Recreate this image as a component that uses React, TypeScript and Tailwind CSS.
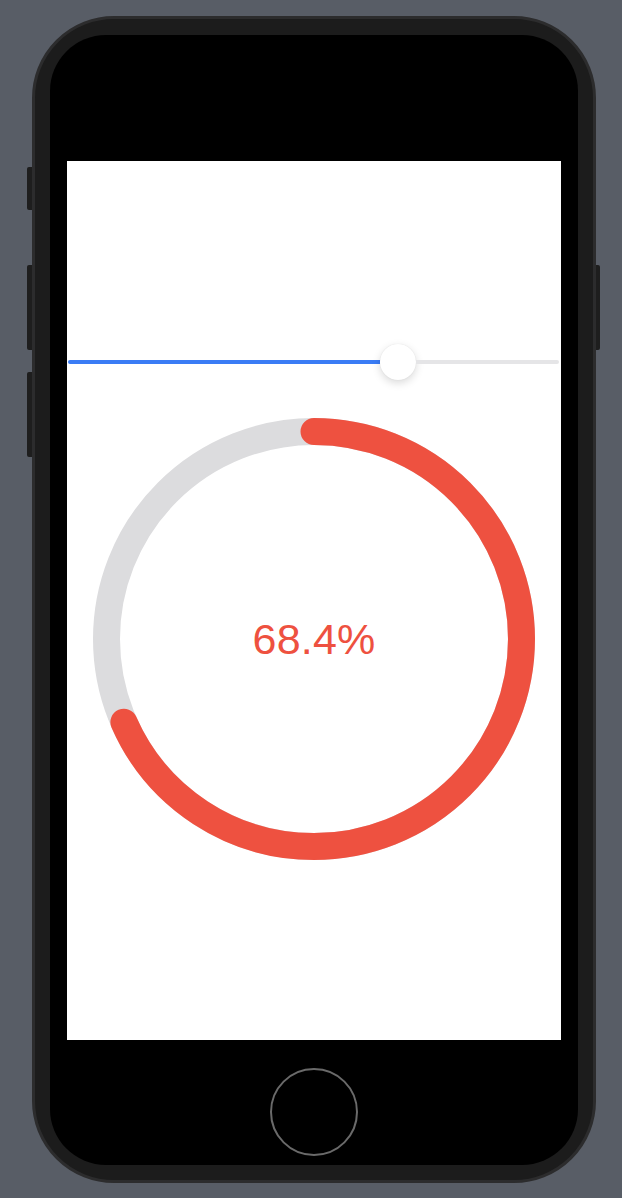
import React from 'react';

const RADIUS = 207.5;
const STROKE = 27;
const CIRC = 2 * Math.PI * RADIUS;

const ProgressRing: React.FC<{ value: number }> = ({ value }) => {
    const size = RADIUS * 2 + STROKE;
    const c = size / 2;
    return (
        <div className="grid place-items-center w-[442px] h-[442px]">
            <svg className="col-start-1 row-start-1" width={size} height={size} viewBox={`0 0 ${size} ${size}`}>
                <circle cx={c} cy={c} r={RADIUS} fill="none" stroke="#dcdcde" strokeWidth={STROKE} />
                <circle
                    cx={c}
                    cy={c}
                    r={RADIUS}
                    fill="none"
                    stroke="#ee5140"
                    strokeWidth={STROKE}
                    strokeLinecap="round"
                    strokeDasharray={`${CIRC * value} ${CIRC}`}
                    transform={`rotate(-90 ${c} ${c})`}
                />
            </svg>
            <span className="col-start-1 row-start-1 text-[43px] leading-none text-[#ee5140] font-['Liberation_Sans',Arial,sans-serif] tracking-[0.2px]">
                {(value * 100).toFixed(1)}%
            </span>
        </div>
    );
};

// blue part, thumb, then the rest of the track
const Slider: React.FC<{ fill: number }> = ({ fill }) => (
    <div className="flex items-center h-[36px] ml-px mr-[2px]">
        <div className="h-[4px] rounded-l-full bg-[#3a7cf5]" style={{ width: fill - 18 }} />
        <div className="w-[36px] h-[36px] shrink-0 rounded-full bg-white shadow-[0_3px_8px_rgba(0,0,0,0.15),0_0_1px_rgba(0,0,0,0.12)]" />
        <div className="flex-1 h-[4px] rounded-r-full bg-[#e5e5e7]" />
    </div>
);

const App: React.FC = () => {
    return (
        <div className="w-[622px] h-[1198px] bg-[#585d66] pt-[16px] pl-[32px] overflow-hidden">
            {/* Phone body */}
            <div className="relative w-[564px] h-[1167px] rounded-[82px] bg-[#1c1c1c] border-[3px] border-[#2c2c2d] pt-[16px] px-[15px]">
                {/* Side buttons */}
                <div className="absolute -left-[8px] top-[148px] w-[5px] h-[43px] rounded-l-[2px] bg-[#1e1e1e]" />
                <div className="absolute -left-[8px] top-[246px] w-[5px] h-[85px] rounded-l-[2px] bg-[#1e1e1e]" />
                <div className="absolute -left-[8px] top-[353px] w-[5px] h-[85px] rounded-l-[2px] bg-[#1e1e1e]" />
                <div className="absolute -right-[7px] top-[246px] w-[4px] h-[85px] rounded-r-[2px] bg-[#1e1e1e]" />

                {/* Screen bezel */}
                <div className="w-[528px] h-[1130px] rounded-[56px] bg-black flex flex-col items-center pt-[126px]">
                    {/* Display */}
                    <div className="w-[494px] h-[879px] bg-white flex flex-col">
                        <div className="mt-[183px]">
                            <Slider fill={330} />
                        </div>
                        <div className="mt-[38px] flex justify-center">
                            <ProgressRing value={0.684} />
                        </div>
                    </div>
                    {/* Home button */}
                    <div className="mt-[28px] w-[88px] h-[88px] rounded-full border-2 border-[#6a6a6a]" />
                </div>
            </div>
        </div>
    );
};

export default App;
